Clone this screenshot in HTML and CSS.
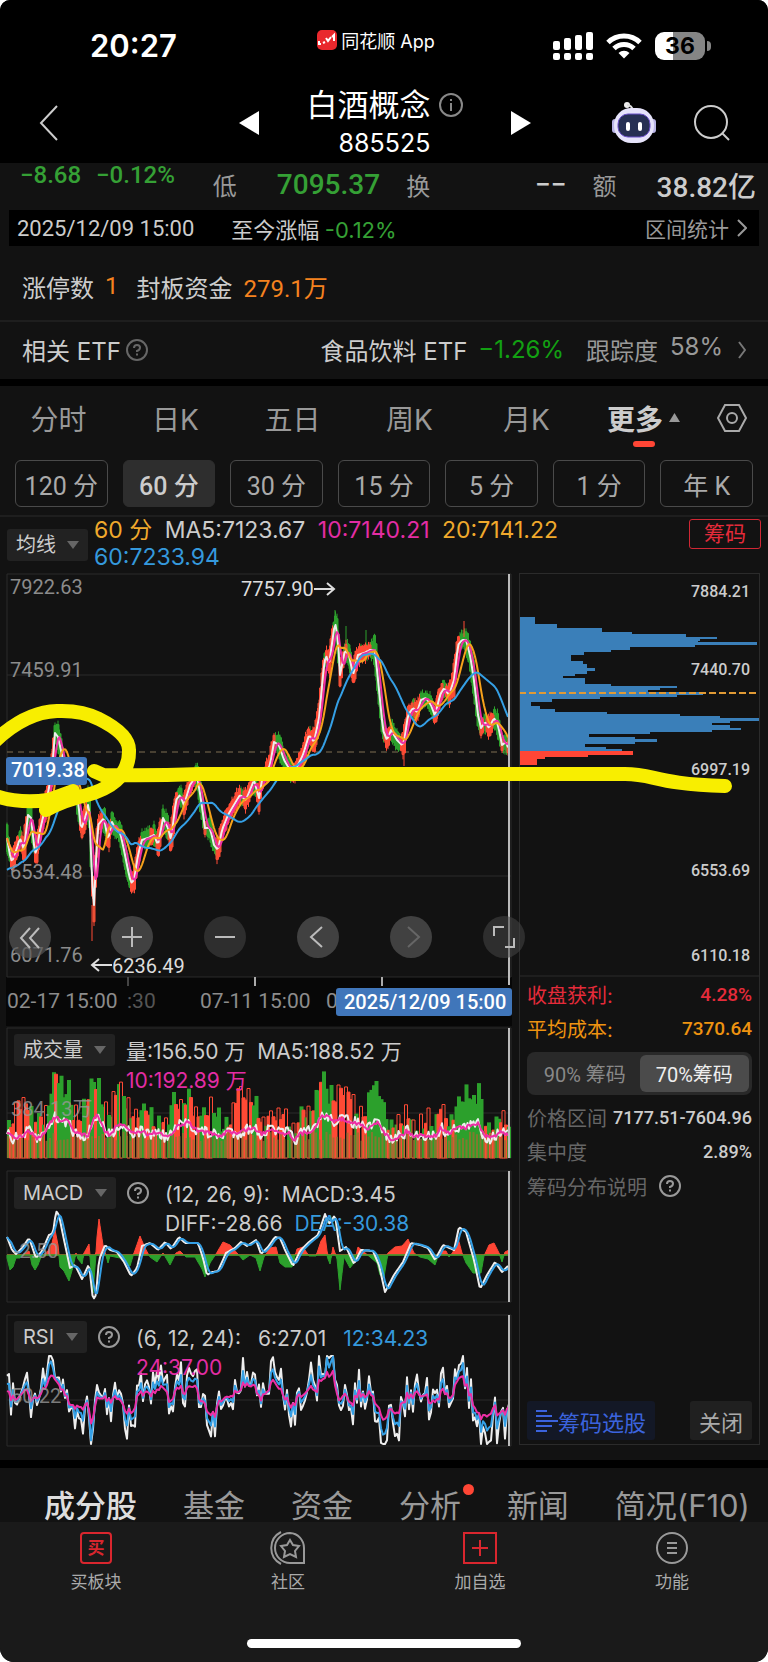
FILE: index.html
```html
<!DOCTYPE html>
<html lang="zh-CN">
<head>
    <meta charset="UTF-8">
    <meta name="viewport" content="width=device-width, initial-scale=1.0">
    <title>白酒概念 885525</title>
    <link rel="stylesheet" href="styles.css">
</head>
<body>
<div class="app">
    <header class="top">
        <!-- Status bar -->
        <div class="status">
            <span class="time">20:27</span>
            <span class="app-name">
                <svg width="20" height="20" viewBox="0 0 20 20"><rect width="20" height="20" rx="5" fill="#e9282d"/><path d="M2 11v3h2M6 13l2-1M9 8l2 3 3-4M15 7l2-2v6" fill="none" stroke="#fff" stroke-width="2"/></svg>
                同花顺 App
            </span>
            <span class="status-icons">
                <svg width="40" height="28" viewBox="0 0 40 28" fill="#fff">
                    <rect x="0" y="9" width="7" height="9" rx="2"/><rect x="11" y="6" width="7" height="12" rx="2"/><rect x="22" y="3" width="7" height="15" rx="2"/><rect x="33" y="0" width="7" height="18" rx="2"/>
                    <rect x="0" y="21" width="7" height="7" rx="2"/><rect x="11" y="21" width="7" height="7" rx="2"/><rect x="22" y="21" width="7" height="7" rx="2"/><rect x="33" y="21" width="7" height="7" rx="2"/>
                </svg>
                <svg width="36" height="26" viewBox="0 0 36 26" fill="none" stroke="#fff" stroke-width="5"><path d="M2 9.500a23 23 0 0 1 32 0"/><path d="M8 15.500a14.500 14.500 0 0 1 20 0"/><path d="M12.500 20a8 8 0 0 1 11 0L18 25.500z" fill="#fff" stroke="none"/></svg>
                <span class="battery">36</span>
            </span>
        </div>
        <!-- Title bar -->
        <div class="title-bar">
            <button class="icon-btn back" aria-label="返回"><svg width="20" height="36" viewBox="0 0 20 36"><path d="M18 1L2 18l16 17" fill="none" stroke="#ccc" stroke-width="2"/></svg></button>
            <div class="title">
                <button class="icon-btn" aria-label="上一个"><svg width="20" height="24" viewBox="0 0 20 24"><path d="M20 0v24L0 12z" fill="#fff"/></svg></button>
                <div class="title-text">
                    <h1>白酒概念 <svg width="24" height="24" viewBox="0 0 24 24" fill="none" stroke="#888" stroke-width="2"><circle cx="12" cy="12" r="11"/><path d="M12 10v8M12 6v2"/></svg></h1>
                    <p>885525</p>
                </div>
                <button class="icon-btn" aria-label="下一个"><svg width="20" height="24" viewBox="0 0 20 24"><path d="M0 0v24l20-12z" fill="#fff"/></svg></button>
            </div>
            <div class="title-actions">
                <button class="icon-btn" aria-label="助手">
                    <svg width="44" height="42" viewBox="0 0 44 42">
                        <circle cx="15" cy="3" r="3" fill="#eee"/><path d="M15 3q5 0 6 6" stroke="#ddd" stroke-width="2" fill="none"/>
                        <rect x="0" y="17" width="6" height="14" rx="3" fill="#b9b4e6"/><rect x="38" y="17" width="6" height="14" rx="3" fill="#b9b4e6"/>
                        <rect x="2" y="6" width="40" height="35" rx="17" fill="#e6e3fa"/><rect x="6" y="12" width="32" height="23" rx="10" fill="#273053" stroke="#6b50c9"/>
                        <rect x="14" y="20" width="4" height="9" rx="2" fill="#fff"/><rect x="26" y="20" width="4" height="9" rx="2" fill="#fff"/>
                    </svg>
                </button>
                <button class="icon-btn" aria-label="搜索"><svg width="38" height="38" viewBox="0 0 38 38" fill="none" stroke="#ccc" stroke-width="2"><circle cx="19" cy="18" r="16"/><path d="M30 29l7 7"/></svg></button>
            </div>
        </div>
    </header>

    <section class="quote">
        <div class="change"><span>−8.68</span><span>−0.12%</span></div>
        <span class="key">低</span><b class="green">7095.37</b>
        <span class="key turnover">换</span><b class="none">−−</b>
        <span class="key">额</span><b class="amount">38.82亿</b>
    </section>
    <div class="range">
        <span>2025/12/09 15:00</span>
        <span>至今涨幅 <em class="green">-0.12%</em></span>
        <a href="#">区间统计 <svg width="10" height="18" viewBox="0 0 10 18"><path d="M1 1l8 8-8 8" fill="none" stroke="#999" stroke-width="2"/></svg></a>
    </div>

    <div class="row limit">
        <span>涨停数</span><em>1</em><span>封板资金</span><em>279.1万</em>
    </div>
    <a class="row etf" href="#">
        <span class="etf-label">相关 ETF <svg class="help" width="22" height="22" viewBox="0 0 22 22"><use href="#help"/></svg></span>
        <span>食品饮料 ETF</span>
        <span class="etf-change">−1.26%</span>
        <span class="track"><span>跟踪度</span><span>58%</span></span>
        <svg width="8" height="18" viewBox="0 0 8 18"><path d="M1 1l6 8-6 8" fill="none" stroke="#777" stroke-width="2"/></svg>
    </a>

    <!-- Period tabs -->
    <nav class="periods">
        <button>分时</button><button>日K</button><button>五日</button><button>周K</button><button>月K</button>
        <button class="active"><span>更多</span><svg width="11" height="9" viewBox="0 0 11 9"><path d="M5.500 0L11 9H0z" fill="#999"/></svg></button>
        <button class="setting" aria-label="设置"><svg width="30" height="28" viewBox="0 0 30 28" fill="none" stroke="#aaa" stroke-width="2"><path d="M8 1h14l7 13-7 13H8L1 14z"/><circle cx="15" cy="14" r="5"/></svg></button>
    </nav>
    <nav class="minutes">
        <button>120 分</button><button class="active">60 分</button><button>30 分</button><button>15 分</button><button>5 分</button><button>1 分</button><button>年 K</button>
    </nav>

    <div class="ma-bar">
        <span class="picker"><select aria-label="主图指标"><option>均线</option></select></span>
        <div class="legend">
            <span class="orange">60 分</span> <span>MA5:7123.67</span> <span class="pink">10:7140.21</span> <span class="orange">20:7141.22</span><br>
            <span class="blue">60:7233.94</span>
        </div>
        <button class="chips">筹码</button>
    </div>

    <main class="charts">
        <div class="left">
            <!-- Candles and time axis -->
            <div class="panel">
                <svg id="kline" viewBox="6 573 506 453">
                    <rect x="6" y="977" width="506" height="49" fill="#070707"/>
                    <path class="frame" d="M7 977V574h504v403zM7 675h504M7 876h504"/>
                    <path d="M7 752h502" stroke="#7f6f52" stroke-dasharray="6 5"/>
                    <g class="candles"></g>
                    <g class="scale">
                        <text x="10" y="594">7922.63</text><text x="10" y="677">7459.91</text><text x="10" y="879">6534.48</text><text x="10" y="962">6071.76</text>
                        <text x="7" y="1008" class="date">02-17 15:00</text><text x="127" y="1008" class="date dim">:30</text><text x="200" y="1008" class="date">07-11 15:00</text><text x="326" y="1008" class="date">0</text>
                    </g>
                    <path d="M128 977v9" stroke="#444" stroke-width="2"/><path d="M255 977v9M382 977v9" stroke="#aaa" stroke-width="2"/>
                    <path class="cursor" d="M509 574v411"/>
                    <g class="mark"><text x="241" y="596">7757.90</text><path d="M314 589h20m-7-6l7 6-7 6M112 965H92m7-6l-7 6 7 6"/><text x="112" y="973">6236.49</text></g>
                    <rect x="6" y="757" width="81" height="28" rx="3" fill="#4076ba"/><text x="11" y="777" class="tag">7019.38</text>
                    <rect x="336" y="988" width="176" height="28" rx="3" fill="#4076ba"/><text x="344" y="1009" class="tag">2025/12/09 15:00</text>
                </svg>
                <div class="tools">
                    <button aria-label="最左"><svg viewBox="0 0 42 42"><path d="M21 12l-9 10 9 10M30 12l-9 10 9 10"/></svg></button>
                    <button aria-label="放大"><svg viewBox="0 0 42 42"><path d="M21 11v20M11 21h20"/></svg></button>
                    <button aria-label="缩小" class="faint"><svg viewBox="0 0 42 42"><path d="M11 21h20"/></svg></button>
                    <button aria-label="左移"><svg viewBox="0 0 42 42"><path d="M25 11L14 21l11 10"/></svg></button>
                    <button aria-label="右移" class="off"><svg viewBox="0 0 42 42"><path d="M18 11l11 10-11 10"/></svg></button>
                    <button aria-label="全屏" class="faint"><svg viewBox="0 0 42 42"><path d="M11 20v-9h10M31 22v9H22"/></svg></button>
                </div>
            </div>
            <!-- Volume -->
            <div class="panel">
                <svg id="volume" viewBox="6 1027 506 132">
                    <path class="frame" d="M7 1028h504v130H7zM7 1113h504"/>
                    <g class="plot"></g>
                    <text x="11" y="1116" class="value">384.13万</text>
                    <path class="cursor" d="M509 1028v130"/>
                </svg>
                <div class="panel-head">
                    <span class="picker"><select aria-label="副图一"><option>成交量</option></select></span>
                    <div class="legend"><span>量:156.50 万</span> <span>MA5:188.52 万</span><br><span class="pink">10:192.89 万</span></div>
                </div>
            </div>
            <!-- MACD -->
            <div class="panel">
                <svg id="macd" viewBox="6 1170 506 133">
                    <path class="frame" d="M7 1171h504v131H7z"/>
                    <g class="plot"></g>
                    <text x="14" y="1258" class="value">-2.50</text>
                    <path class="cursor" d="M509 1171v131"/>
                </svg>
                <div class="panel-head">
                    <span class="picker"><select aria-label="副图二"><option>MACD</option></select></span>
                    <svg class="help" width="22" height="22" viewBox="0 0 22 22"><use href="#help"/></svg>
                    <div class="legend"><span>(12, 26, 9):</span> <span>MACD:3.45</span><br><span>DIFF:-28.66</span> <span class="blue">DEA:-30.38</span></div>
                </div>
            </div>
            <!-- RSI -->
            <div class="panel">
                <svg id="rsi" viewBox="6 1313 506 133">
                    <path class="frame" d="M7 1314h504v131H7zM7 1399h504"/>
                    <g class="plot"></g>
                    <text x="11" y="1402" class="value">50.22</text>
                    <path class="cursor" d="M509 1314v131"/>
                </svg>
                <div class="panel-head">
                    <span class="picker"><select aria-label="副图三"><option>RSI</option></select></span>
                    <svg class="help" width="22" height="22" viewBox="0 0 22 22"><use href="#help"/></svg>
                    <div class="legend spaced"><span>(6, 12, 24):</span> <span>6:27.01</span> <span class="blue">12:34.23</span><br><span class="pink">24:37.00</span></div>
                </div>
            </div>
        </div>

        <!-- Chip distribution -->
        <aside class="side">
            <svg id="dist" viewBox="519 573 241 404">
                <path class="frame" d="M519 976h241"/>
                <g class="plot"></g>
                <path d="M519 693h241" stroke="#e09a35" stroke-width="2" stroke-dasharray="7 3"/>
                <g class="levels"><text x="691" y="597">7884.21</text><text x="691" y="675">7440.70</text><text x="691" y="775">6997.19</text><text x="691" y="876">6553.69</text><text x="691" y="961">6110.18</text></g>
            </svg>
            <dl>
                <div class="red"><dt>收盘获利:</dt><dd>4.28%</dd></div>
                <div class="amber"><dt>平均成本:</dt><dd>7370.64</dd></div>
            </dl>
            <div class="segment"><button>90% 筹码</button><button class="active">70%筹码</button></div>
            <dl>
                <div><dt>价格区间</dt><dd>7177.51-7604.96</dd></div>
                <div><dt>集中度</dt><dd>2.89%</dd></div>
            </dl>
            <a class="explain" href="#">筹码分布说明 <svg class="help" width="22" height="22" viewBox="0 0 22 22"><use href="#help"/></svg></a>
            <div class="side-foot">
                <button class="pick"><svg width="22" height="22" viewBox="0 0 22 22"><path d="M0 1h11M0 6h16M0 11h22M0 16h16M0 21h11" stroke="#3b63dd" stroke-width="2"/></svg>筹码选股</button>
                <button class="close">关闭</button>
            </div>
        </aside>

        <!-- Hand drawn note -->
        <svg class="pen" viewBox="0 573 768 403">
            <path d="M-6 742Q25 712 57 711Q82 710 99 719Q129 734 129 750Q130 783 87 795Q65 800 46 810"/>
            <path d="M-4 796Q20 804 48 800L73 791"/>
            <path d="M94 771L103 775Q150 776 200 774H625C655 774 655 784 725 786"/>
        </svg>
    </main>

    <nav class="sections">
        <a class="active" href="#">成分股</a><a href="#">基金</a><a href="#">资金</a><a class="dot" href="#">分析</a><a href="#">新闻</a><a href="#">简况(F10)</a>
    </nav>
    <footer>
        <nav class="bottom">
            <button><svg width="34" height="34" viewBox="0 0 34 34"><rect x="2" y="2" width="30" height="30" rx="3" fill="none" stroke="#d9262e" stroke-width="2"/><text x="17" y="23" text-anchor="middle" class="buy">买</text></svg>买板块</button>
            <button><svg width="38" height="34" viewBox="0 0 38 34" fill="none" stroke="#999" stroke-width="2"><path d="M21 2a15 15 0 0 0 0 30h14V17A14.500 15 0 0 0 21 2zM12 1a18 18 0 0 0 0 32"/><path d="M21 9l3 5 6 1-4 5 1 6-6-3-6 3 1-6-4-5 6-1z"/></svg>社区</button>
            <button><svg width="36" height="34" viewBox="0 0 36 34" fill="none" stroke="#d9262e" stroke-width="2"><rect x="2" y="2" width="32" height="30"/><path d="M18 9v16M10 17h16"/></svg>加自选</button>
            <button><svg width="34" height="34" viewBox="0 0 34 34" fill="none" stroke="#999" stroke-width="2"><circle cx="17" cy="17" r="15"/><path d="M12 12h10M12 17h10M12 22h10"/></svg>功能</button>
        </nav>
        <div class="home"></div>
    </footer>
</div>

<svg width="0" height="0" class="defs">
    <symbol id="help" viewBox="0 0 22 22"><circle cx="11" cy="11" r="10" fill="none" stroke="currentColor" stroke-width="2"/><path d="M8 9q0-3 3-3t3 2.500-3 3.500v1M11 14.500v2" fill="none" stroke="currentColor" stroke-width="2"/></symbol>
</svg>
<script src="charts.js"></script>
</body>
</html>
```

FILE: styles.css
```css
* {
    box-sizing: border-box;
}

body {
    margin: 0;
    background: #fff;
    color: #ccc;
    font-family: Inter, "Noto Sans CJK SC", sans-serif;
    font-size: 22px;
}

h1, p, dl, dd {
    margin: 0;
}

button, select {
    font: inherit;
    color: inherit;
    border: none;
    background: none;
    padding: 0;
}

a {
    color: inherit;
    text-decoration: none;
}

em {
    font-style: normal;
}

svg {
    display: block;
    flex-shrink: 0;
}

.app {
    background: #121212;
    border-radius: 10px 10px 14px 14px;
    overflow: hidden;
}

.green { color: #35a035; }
.orange { color: #f0a92c; }
.pink { color: #e32da4; }
.blue { color: #3599dc; }

.defs {
    position: absolute;
}

/* Header */
.top {
    background: #000;
    height: 163px;
    color: #fff;
}

.status {
    display: grid;
    grid-template-columns: 1fr auto 1fr;
    height: 74px;
    padding: 18px 59px 0;
}

.time {
    margin-left: 31px;
    font-size: 31px;
    font-weight: 600;
    line-height: 56px;
}

.app-name {
    display: flex;
    gap: 4px;
    align-items: center;
    height: 44px;
    font-size: 18px;
    margin-right: 16px;
}

.status-icons {
    display: flex;
    justify-content: flex-end;
    align-items: center;
    gap: 13px;
    height: 56px;
}

.battery {
    position: relative;
    width: 50px;
    height: 28px;
    margin-right: 4px;
    border-radius: 9px;
    background: linear-gradient(90deg, #fff 36%, #858585 36%);
    color: #000;
    font-weight: 700;
    font-size: 23px;
    line-height: 28px;
    text-align: center;
}

.battery::after {
    content: "";
    position: absolute;
    left: 52px;
    top: 9px;
    width: 4px;
    height: 10px;
    border-radius: 0 4px 4px 0;
    background: #858585;
}

.title-bar {
    display: grid;
    grid-template-columns: 1fr auto 1fr;
    align-items: center;
    padding: 8px 38px 0 39px;
    height: 89px;
}

.icon-btn {
    display: block;
}

.back {
    justify-self: start;
}

.title {
    display: flex;
    align-items: center;
    gap: 48px;
}

.title-text {
    text-align: center;
}

h1 {
    display: flex;
    align-items: center;
    gap: 8px;
    font-size: 31px;
    font-weight: 400;
    line-height: 40px;
}

.title-text p {
    font-size: 25px;
    line-height: 36px;
}

.title-actions {
    display: flex;
    align-items: center;
    justify-content: flex-end;
    gap: 36px;
}

/* Quote strip */
.quote {
    display: flex;
    align-items: center;
    height: 47px;
    padding: 0 12px 4px 20px;
    font-family: Roboto, "Noto Sans CJK SC", sans-serif;
}

.quote b {
    font-size: 28px;
    font-weight: 500;
}

.change {
    display: flex;
    gap: 15px;
    align-self: flex-start;
    color: #35a035;
    font-size: 24px;
    font-weight: 500;
    line-height: 24px;
}

.key {
    color: #999;
    font-size: 24px;
    margin: 0 26px;
}

.change + .key {
    margin: 0 40px 0 38px;
}

.none {
    flex: 1;
    text-align: right;
}

.amount {
    margin-left: 14px;
}

.range {
    display: flex;
    align-items: center;
    gap: 37px;
    height: 36px;
    margin: 0 9px;
    padding: 0 12px 0 8px;
    background: #000;
    font-family: Roboto, "Noto Sans CJK SC", sans-serif;
}

.range em {
    font-family: Inter, sans-serif;
}

.range a {
    display: flex;
    align-items: center;
    gap: 8px;
    margin-left: auto;
    color: #999;
    font-size: 21px;
}

.row {
    display: flex;
    align-items: center;
    padding: 0 22px;
    font-size: 24px;
}

.limit {
    height: 76px;
    padding-top: 6px;
    border-bottom: 2px solid #1e1e1e;
    font-family: Roboto, "Noto Sans CJK SC", sans-serif;
}

.limit em {
    color: #f5821f;
    margin: 0 18px 0 11px;
}

.etf {
    height: 57px;
    padding-bottom: 2px;
}

.etf-label {
    display: flex;
    align-items: center;
    gap: 5px;
    margin-right: auto;
}

.help {
    color: #999;
}

.etf-label .help {
    color: #666;
}

.etf-change {
    color: #12a012;
    margin: 0 22px 0 11px;
}

.track {
    display: flex;
    gap: 12px;
    color: #999;
    margin-right: 15px;
}

/* Period tabs */
.periods {
    display: grid;
    grid-template-columns: repeat(6, 117fr) 66fr;
    align-items: center;
    height: 76px;
    padding-bottom: 6px;
    border-top: 7px solid #000;
    color: #999;
    font-size: 28px;
}

.periods .active {
    position: relative;
    display: flex;
    align-items: center;
    justify-content: center;
    gap: 6px;
    color: #ccc;
    font-weight: 700;
}

.periods .active::after {
    content: "";
    position: absolute;
    left: 50%;
    bottom: -9px;
    width: 22px;
    height: 6px;
    margin-left: -11px;
    border-radius: 3px;
    background: #ff4635;
}

.setting {
    justify-self: start;
    margin-left: 15px;
}

.minutes {
    display: grid;
    grid-template-columns: repeat(7, 1fr);
    gap: 15px;
    padding: 5px 15px 8px;
    border-bottom: 2px solid #1e1e1e;
    font-family: Roboto, "Noto Sans CJK SC", sans-serif;
}

.minutes button {
    height: 47px;
    border: 1px solid #4a4a4a;
    border-radius: 6px;
    color: #aaa;
    font-size: 25px;
    white-space: nowrap;
}

.minutes .active {
    border-color: #2e2e2e;
    background: #2e2e2e;
    color: #ccc;
    font-weight: 500;
}

.ma-bar {
    display: flex;
    gap: 6px;
    height: 56px;
    padding: 0 7px;
}

.ma-bar .picker {
    margin-top: 12px;
}

.ma-bar .legend {
    font-size: 23px;
    line-height: 27px;
}

.picker {
    position: relative;
    height: 32px;
}

.picker select {
    appearance: none;
    height: 32px;
    padding: 0 32px 0 9px;
    border-radius: 3px;
    background: #222;
    font-size: 20px;
}

.picker::after {
    content: "";
    position: absolute;
    right: 9px;
    top: 12px;
    border: 6px solid transparent;
    border-top: 8px solid #666;
    border-bottom: none;
    pointer-events: none;
}

.legend {
    white-space: nowrap;
}

.legend span {
    margin-right: 6px;
}

.chips {
    height: 30px;
    margin: 2px 0 0 auto;
    padding: 0 14px;
    border: 1px solid #d02734;
    border-radius: 3px;
    color: #e52b3a;
    font-size: 21px;
    line-height: 26px;
}

/* Charts */
.charts {
    position: relative;
    display: grid;
    grid-template-columns: 506fr 241fr;
    gap: 7px;
    padding: 0 8px 13px 6px;
}

.left {
    display: flex;
    flex-direction: column;
    gap: 11px;
}

.panel {
    position: relative;
}

.panel:first-child {
    margin-bottom: -10px;
}

.panel > svg, .side > svg {
    width: 100%;
    height: auto;
}

.panel-head {
    position: absolute;
    top: 7px;
    left: 8px;
    display: flex;
    gap: 11px;
    align-items: flex-start;
}

.panel-head .legend {
    margin-top: 3px;
    font-size: 21px;
    line-height: 29px;
}

.panel-head .help {
    margin-top: 5px;
}

.help + .legend {
    margin-left: 5px;
}

.panel-head .spaced span {
    margin-right: 11px;
}

.frame {
    fill: none;
    stroke: #2b2b2b;
    stroke-width: 1;
}

.cursor {
    stroke: #bbb;
    stroke-width: 2;
}

.line {
    fill: none;
    stroke-width: 2;
    stroke-linejoin: round;
}

.white { stroke: #eee; }
.magenta { stroke: #ee2fa5; }
.gold { stroke: #f7a21b; }
.sky { stroke: #35a0e6; }

svg text {
    font-family: Roboto, "Noto Sans CJK SC", sans-serif;
}

.scale text {
    fill: #8c8c8c;
    font-size: 20px;
}

.scale .date {
    font-size: 21px;
}

.scale .dim {
    fill: #555;
}

.mark text {
    fill: #ddd;
    font-size: 20px;
}

.mark path {
    fill: none;
    stroke: #ddd;
    stroke-width: 2;
}

.tag {
    fill: #fff;
    font-size: 20px;
    font-weight: 500;
}

.value {
    fill: #999;
    fill-opacity: .8;
    font-size: 20px;
}

.levels text {
    fill: #ccc;
    font-size: 16px;
    font-weight: 500;
}

.tools {
    position: absolute;
    left: 3px;
    top: 343px;
    display: flex;
    gap: 51px;
}

.tools button {
    width: 42px;
    height: 42px;
    border-radius: 50%;
    background: rgba(85, 85, 85, .7);
}

.tools button:first-child {
    margin-right: 9px;
}

.tools .faint {
    background: rgba(70, 70, 70, .55);
}

.tools path {
    fill: none;
    stroke: #bbb;
    stroke-width: 2;
}

.tools .off path {
    stroke: #666;
}

.pen {
    position: absolute;
    left: 0;
    top: 0;
    width: 100%;
    pointer-events: none;
}

.pen path {
    fill: none;
    stroke: #f8ee00;
    stroke-width: 14;
    stroke-linecap: round;
    stroke-linejoin: round;
}

/* Chip distribution */
.side {
    display: flex;
    flex-direction: column;
    outline: 1px solid #2b2b2b;
    outline-offset: -1px;
    margin-bottom: 2px;
}

.side dl {
    padding: 0 8px;
    font-size: 20px;
}

.side dl div {
    display: flex;
    justify-content: space-between;
    align-items: center;
    height: 34px;
    color: #666;
    white-space: nowrap;
}

.side dd {
    color: #ccc;
    font-family: Roboto, sans-serif;
    font-weight: 500;
    font-size: 18px;
}

.side .red, .side .red dd {
    color: #e52b3a;
}

.side .amber, .side .amber dd {
    color: #ee9310;
}

.side .red dd, .side .amber dd {
    font-size: 19px;
}

.segment {
    display: grid;
    grid-template-columns: 1fr 1fr;
    margin: 7px 8px 5px;
    padding: 3px;
    height: 43px;
    border-radius: 8px;
    background: #292929;
    font-family: Roboto, "Noto Sans CJK SC", sans-serif;
    font-size: 20px;
    color: #888;
}

.segment .active {
    border-radius: 6px;
    background: #4b4b4b;
    color: #eee;
}

.explain {
    display: flex;
    align-items: center;
    gap: 12px;
    height: 36px;
    padding: 0 8px;
    color: #666;
    font-size: 20px;
}

.side-foot {
    display: flex;
    justify-content: space-between;
    margin-top: auto;
    padding: 0 8px 5px;
    font-size: 22px;
}

.side-foot button {
    height: 39px;
    padding: 0 9px;
    border-radius: 3px;
    background: #202020;
    color: #aaa;
}

.side-foot .pick {
    display: flex;
    align-items: center;
    background: #131826;
    color: #3b63dd;
}

/* Bottom navigation */
.sections {
    display: flex;
    justify-content: space-between;
    align-items: flex-end;
    height: 62px;
    padding: 0 18px 0 44px;
    border-top: 8px solid #000;
    color: #999;
    font-size: 31px;
    line-height: 32px;
}

.sections .active {
    color: #ddd;
    font-weight: 500;
}

.dot {
    position: relative;
}

.dot::after {
    content: "";
    position: absolute;
    right: -13px;
    top: -6px;
    width: 11px;
    height: 11px;
    border-radius: 50%;
    background: #ff4635;
}

footer {
    position: relative;
    height: 140px;
    padding-top: 9px;
    background: #1a1a1a;
}

.bottom {
    display: grid;
    grid-template-columns: repeat(4, 1fr);
}

.bottom button {
    display: flex;
    flex-direction: column;
    align-items: center;
    gap: 3px;
    color: #aaa;
    font-size: 17px;
}

.bottom .buy {
    fill: #d9262e;
    font-size: 17px;
    font-weight: 700;
}

.home {
    width: 274px;
    height: 9px;
    margin: 46px auto 0;
    border-radius: 5px;
    background: #fff;
}
```

FILE: charts.js
```js
const NS = "http://www.w3.org/2000/svg";
const STEP = 1.5;

// "x,y x,y ..." -> [[x, y], ...]
const pts = s => s.trim().split(/\s+/).map(p => p.split(",").map(Number));

// Repeatable noise in -1..1
let seed = 7;
function noise() {
    seed = (seed * 16807) % 2147483647;
    return seed / 1073741823.5 - 1;
}

function at(list, x) {
    for (let i = 1; i < list.length; i++) {
        const [x0, y0] = list[i - 1];
        const [x1, y1] = list[i];
        if (x <= x1) return y0 + (y1 - y0) * Math.max(0, x - x0) / (x1 - x0);
    }
    return list[list.length - 1][1];
}

function draw(parent, d, attrs) {
    const path = document.createElementNS(NS, "path");
    path.setAttribute("d", d);
    for (const key in attrs) path.setAttribute(key, attrs[key]);
    parent.appendChild(path);
}

function line(parent, list, name) {
    draw(parent, "M" + list.map(p => p[0].toFixed(1) + " " + p[1].toFixed(1)).join("L"), { class: "line " + name });
}

// Trailing average over n samples
function average(list, n) {
    return list.map((p, i) => {
        const part = list.slice(Math.max(0, i - n + 1), i + 1);
        return [p[0], part.reduce((sum, q) => sum + q[1], 0) / part.length];
    });
}

function sample(list, step = STEP) {
    const out = [];
    for (let x = 7; x <= 509; x += step) out.push([x, at(list, x)]);
    return out;
}

function drawKline() {
    const g = document.querySelector("#kline .candles");
    const price = sample(pts(`7,838 10,855 12,862 17,848 20,838 24,850 28,815 31,818 34,845 36,855 40,830 46,805 52,770 55,733
        58,737 62,755 66,775 72,770 78,800 81,830 86,815 89,800 92,880 94,905 96,860 98,825 104,818 108,840 112,822 116,830
        120,832 124,850 128,870 131,883 134,880 138,855 142,840 148,838 154,835 158,845 163,818 168,828 171,840 176,800
        180,795 184,805 190,785 197,775 201,800 205,828 210,828 214,845 218,850 222,830 228,815 234,805 240,795 246,800
        254,780 259,798 262,780 270,765 274,742 279,745 284,760 293,775 298,765 303,755 309,735 314,742 319,718 324,665
        326,655 329,665 335,622 338,640 340,675 345,650 349,655 353,675 358,655 364,653 370,650 375,650 379,690 383,730
        387,740 391,730 397,740 402,745 404,742 408,715 413,708 417,712 421,700 426,698 431,705 435,716 440,695 444,688
        449,695 454,680 458,645 462,640 466,640 470,655 474,680 478,715 481,728 485,722 489,728 494,718 498,725 502,745
        506,742 509,750`));
    let up = "", down = "";
    price.forEach(([x, y], i) => {
        const next = price[Math.min(i + 2, price.length - 1)][1];
        const falling = next - y + noise() * 5 > 0;
        const h = 4 + Math.min(9, Math.abs(next - y) * .35) + Math.abs(noise()) * 4;
        const top = Math.max(616, y - h), bottom = y + h;
        const d = `M${x - 1} ${top}h2V${bottom}h-2zM${x} ${top - Math.abs(noise()) * 5}V${bottom + Math.abs(noise()) * 5}`;
        if (falling) down += d; else up += d;
    });
    // the extremes
    down += "M335 610v20M116 820v10M366 630v20M346 626v20";
    up += "M92 905v36M464 621v16M404 730v36M218 850v10";
    draw(g, down, { fill: "#2ca02c", stroke: "#2ca02c" });
    draw(g, up, { fill: "#b0693c", stroke: "#ff4a35" });
    line(g, price, "white");
    line(g, average(price, 4), "magenta");
    line(g, average(price, 9), "gold");
    // history before the first candle keeps the slow line low at the left edge
    const before = [];
    for (let x = -33; x < 7; x += STEP) before.push([x, 871]);
    line(g, average(before.concat(price), 27).slice(before.length), "sky");
}

function drawVolume() {
    const g = document.querySelector("#volume .plot");
    const top = pts(`7,1120 17,1097 27,1098 33,1117 45,1105 50,1075 55,1068 62,1080 68,1080 72,1105 80,1105 88,1080 92,1076
        97,1078 104,1100 108,1115 115,1074 125,1092 132,1112 140,1103 148,1105 155,1115 165,1118 172,1092 180,1100 188,1087
        193,1106 200,1110 211,1095 216,1105 222,1120 230,1110 237,1085 245,1090 249,1087 257,1100 262,1117 273,1108 284,1108
        293,1125 298,1106 306,1108 313,1095 321,1068 326,1085 334,1085 341,1085 350,1090 358,1108 365,1100 371,1077 378,1085
        385,1115 392,1122 400,1110 406,1103 412,1120 427,1108 433,1118 440,1100 448,1118 456,1098 466,1082 472,1095 477,1080
        482,1118 490,1125 499,1108 508,1116`);
    for (let x = 7, i = 0; x < 508; x += 2.5, i++) {
        const tall = i % 3 === 0;
        const y = at(top, x) + (tall ? 0 : 3 + Math.abs(noise()) * 16);
        const greenZone = x > 365 && x < 386 || x > 453 && x < 479 || x > 56 && x < 70;
        if (greenZone || noise() > .15) {
            draw(g, `M${x} ${Math.min(y, 1150)}h4V1158h-4z`, { fill: "#2ca02c" });
        } else {
            draw(g, `M${x} ${Math.min(y, 1150)}h3V1158h-3z`, { fill: tall ? "#121212" : "#ff4a35", stroke: "#ff4a35" });
        }
    }
    for (let x = 7; x < 510; x += 3.5) {
        draw(g, `M${x} ${1136 + noise() * 5}h2V1158h-2z`, { fill: "#96702f", "fill-opacity": .8 });
    }
    const ma = sample(pts(`7,1132 14,1139 20,1137 30,1131 37,1139 44,1134 50,1122 56,1117 62,1123 68,1120 73,1131 88,1136
        94,1118 98,1116 104,1130 110,1135 117,1126 125,1126 135,1134 142,1130 148,1135 156,1132 165,1137 172,1134 177,1127
        189,1122 196,1130 202,1131 212,1134 220,1137 228,1130 236,1134 245,1130 253,1128 262,1134 272,1128 280,1133 289,1133
        295,1140 300,1134 312,1131 320,1118 327,1115 332,1121 340,1119 350,1121 360,1124 367,1130 378,1121 386,1135 392,1140
        400,1136 407,1131 414,1136 425,1135 435,1136 441,1128 450,1134 457,1126 465,1128 478,1123 484,1136 491,1138 500,1132 509,1135`));
    line(g, ma.map(([x, y]) => [x, y + noise() * 6]), "white");
    line(g, ma.map(([x, y]) => [x, y + noise() * 2]), "magenta");
}

function drawMacd() {
    const g = document.querySelector("#macd .plot");
    const bars = pts(`7,-3 10,-15 13,-12 16,-3 20,-3 22,0 29,4 32,-10 35,-15 38,-10 41,-2 48,4 52,12 55,25 58,10 60,-12 64,-16
        69,-26 73,-12 76,2 78,-4 82,-9 84,2 89,11 91,-15 93,-38 95,-12 97,18 99,36 103,10 108,-8 110,-1 120,-3 130,-11 134,2
        140,19 145,7 150,-2 157,-7 163,2 170,-10 176,2 180,4 186,-2 195,-2 202,-14 205,-22 210,-8 216,1 223,13 230,10 237,2
        243,-5 250,0 256,-3 260,-16 264,-2 270,7 276,8 280,-8 285,-12 292,-12 297,6 303,8 309,-1 316,-1 321,14 325,20 328,-4
        330,-9 333,8 337,-4 340,-35 344,-2 350,-13 354,-8 358,8 364,3 370,-2 377,-8 380,-20 384,-22 388,2 395,8 402,9 408,16
        414,2 420,-2 428,-4 435,-10 440,4 446,4 449,-2 453,3 458,17 462,2 466,-8 473,-18 481,-18 484,-1 489,10 494,12 499,2
        502,-7 505,3 509,5`);
    const area = sign => "M7 1255" + sample(bars, 1).map(([x, v]) => `L${x} ${1255 - sign * Math.max(0, v * sign)}`).join("") + "L509 1255z";
    draw(g, area(1), { fill: "#ff4635", stroke: "#ff4635" });
    draw(g, area(-1), { fill: "#2ca02c", stroke: "#2ca02c" });
    const diff = sample(pts(`7,1237 12,1250 16,1254 22,1248 29,1238 36,1258 42,1251 49,1235 53,1233 56,1211 59,1215 63,1235
        70,1268 75,1265 82,1279 89,1264 93,1300 96,1295 99,1260 105,1245 110,1250 117,1252 124,1262 131,1276 137,1268 142,1246
        150,1243 158,1250 165,1242 171,1249 179,1237 185,1243 191,1243 198,1243 203,1258 207,1275 212,1272 218,1271 226,1253
        235,1248 241,1242 247,1246 256,1240 261,1254 268,1247 275,1237 280,1238 285,1250 293,1266 300,1251 309,1242 318,1235
        325,1214 329,1224 335,1215 340,1251 346,1247 354,1264 361,1250 373,1251 379,1265 385,1292 394,1275 403,1262 411,1243
        420,1245 428,1248 435,1260 443,1245 454,1250 459,1227 466,1232 474,1260 480,1289 487,1275 495,1262 502,1272 509,1265`));
    line(g, diff, "white");
    line(g, average(diff, 4), "sky");
}

function drawRsi() {
    const g = document.querySelector("#rsi .plot");
    const slow = sample(pts(`7,1393 15,1399 25,1390 32,1398 40,1395 48,1383 54,1373 60,1385 66,1394 70,1405 80,1405 88,1405
        92,1423 97,1400 105,1397 118,1399 125,1408 132,1413 138,1395 145,1392 155,1394 163,1386 170,1401 176,1388 185,1389
        195,1386 200,1398 207,1410 215,1415 220,1400 228,1394 238,1390 246,1382 255,1385 260,1400 268,1388 274,1380 280,1390
        292,1405 300,1393 308,1388 316,1390 321,1378 326,1372 330,1378 333,1372 338,1400 343,1392 352,1403 358,1393 370,1393
        376,1400 383,1415 390,1412 400,1408 407,1395 415,1393 425,1395 435,1405 442,1391 452,1396 457,1378 461,1375 467,1385
        474,1405 480,1417 488,1411 494,1407 500,1415 509,1408`), 2);
    const jitter = slow.map(() => noise());
    const spread = (scale, swing) => slow.map(([x, y], i) =>
        [x, Math.max(1355, Math.min(1443, 1396 + (y - 1396) * scale + jitter[i] * swing))]);
    line(g, spread(1.8, 22), "white");
    line(g, spread(1.4, 12), "sky");
    line(g, spread(1, 4), "magenta");
}

function drawDistribution() {
    const g = document.querySelector("#dist .plot");
    // each step: bottom y, right x
    const steps = pts(`624,535 628,557 632,602 634,632 637,686 639,717 641,700 642,698 645,757 647,695 650,630 652,611 655,584
        661,571 664,583 668,587 671,595 674,587 676,575 678,563 684,585 686,611 688,677 690,660 692,648 695,703 697,677 699,600
        702,552 706,531 709,540 712,555 714,607 716,680 718,720 721,760 723,730 725,712 728,730 730,741 732,712 734,650 737,589
        739,635 742,657 744,635 747,585 749,606 751,622`);
    draw(g, "M520 617" + steps.map(([y, x]) => `H${x}V${y}`).join("") + "H520z", { fill: "#3a7fb9" });
    draw(g, "M520 751H633V755H588V757H545V759H537V765H520z", { fill: "#ff4635" });
}

drawKline();
drawVolume();
drawMacd();
drawRsi();
drawDistribution();
```
